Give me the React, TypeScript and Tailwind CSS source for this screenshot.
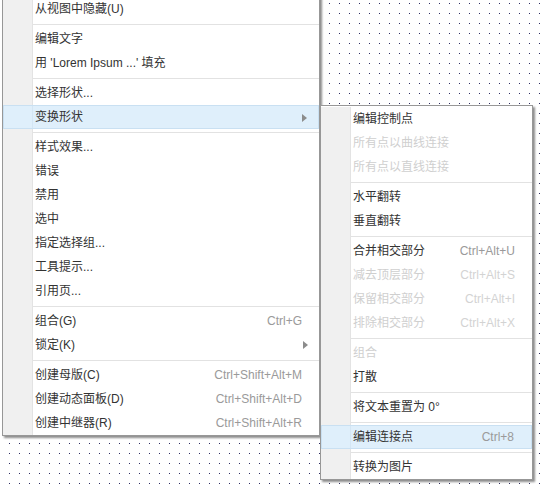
import { ReactNode } from 'react';

type Item =
  | { sep: true }
  | {
      sep?: false;
      label: ReactNode;
      shortcut?: string;
      arrow?: boolean;
      disabled?: boolean;
      active?: boolean;
    };

const mainItems: Item[] = [
  { label: '从视图中隐藏(U)' },
  { sep: true },
  { label: '编辑文字' },
  { label: "用 'Lorem Ipsum ...' 填充" },
  { sep: true },
  { label: '选择形状...' },
  { label: '变换形状', arrow: true, active: true },
  { sep: true },
  { label: '样式效果...' },
  { label: '错误' },
  { label: '禁用' },
  { label: '选中' },
  { label: '指定选择组...' },
  { label: '工具提示...' },
  { label: '引用页...' },
  { sep: true },
  { label: '组合(G)', shortcut: 'Ctrl+G' },
  { label: '锁定(K)', arrow: true },
  { sep: true },
  { label: '创建母版(C)', shortcut: 'Ctrl+Shift+Alt+M' },
  { label: '创建动态面板(D)', shortcut: 'Ctrl+Shift+Alt+D' },
  { label: '创建中继器(R)', shortcut: 'Ctrl+Shift+Alt+R' },
];

const subItems: Item[] = [
  { label: '编辑控制点' },
  { label: '所有点以曲线连接', disabled: true },
  { label: '所有点以直线连接', disabled: true },
  { sep: true },
  { label: '水平翻转' },
  { label: '垂直翻转' },
  { sep: true },
  { label: '合并相交部分', shortcut: 'Ctrl+Alt+U' },
  { label: '减去顶层部分', shortcut: 'Ctrl+Alt+S', disabled: true },
  { label: '保留相交部分', shortcut: 'Ctrl+Alt+I', disabled: true },
  { label: '排除相交部分', shortcut: 'Ctrl+Alt+X', disabled: true },
  { sep: true },
  { label: '组合', disabled: true },
  { label: '打散' },
  { sep: true },
  { label: '将文本重置为 0°' },
  { sep: true },
  { label: '编辑连接点', shortcut: 'Ctrl+8', active: true },
  { sep: true },
  { label: '转换为图片' },
];

function Arrow() {
  return (
    <svg width="5" height="8" viewBox="0 0 5 8" className="absolute right-[11px] top-[8px]">
      <path d="M0 0 L5 4 L0 8 Z" fill="#8c8c8c" />
    </svg>
  );
}

function MenuRow({ item }: { item: Item }) {
  if (item.sep) {
    return (
      <div className="flex h-[6px]">
        <div className="w-[29px] shrink-0 bg-[#f0f0f0]" />
        <div className="w-px shrink-0 bg-[#e3e3e3]" />
        <div className="flex-1 pt-[3px]">
          <div className="h-px bg-[#e2e2e2]" />
        </div>
      </div>
    );
  }

  return (
    <div
      className={
        item.active
          ? 'relative flex h-[24px] border border-[#c9e0f2] bg-[#dfeffb]'
          : 'relative flex h-[24px]'
      }
    >
      <div className={item.active ? 'w-[28px] shrink-0' : 'w-[29px] shrink-0 bg-[#f0f0f0]'} />
      <div className={item.active ? 'w-px shrink-0 bg-[#d4e6f4]' : 'w-px shrink-0 bg-[#e3e3e3]'} />
      <div className="flex flex-1 items-center pl-[2px] pr-[17px]">
        <span className={item.disabled ? 'text-[#cfcfcf]' : 'text-[#333]'}>{item.label}</span>
        {item.shortcut && (
          <span className={item.disabled ? 'ml-auto text-[#d3d3d3]' : 'ml-auto text-[#9a9a9a]'}>
            {item.shortcut}
          </span>
        )}
      </div>
      {item.arrow && <Arrow />}
    </div>
  );
}

function Menu({ items, className }: { items: Item[]; className: string }) {
  return (
    <div
      className={`absolute border border-[#979797] bg-white pt-[1px] shadow-[2px_2px_2px_rgba(0,0,0,0.45)] ${className}`}
    >
      {items.map((item, i) => (
        <MenuRow key={i} item={item} />
      ))}
    </div>
  );
}

export default function App() {
  return (
    <div className="relative h-[488px] w-[540px] overflow-hidden bg-white font-['Liberation_Sans','Noto_Sans_CJK_SC',sans-serif] text-[12px] leading-none">
      <svg className="absolute inset-0" width="540" height="488">
        <defs>
          <pattern id="dots" width="10" height="10" patternUnits="userSpaceOnUse">
            <rect x="9" y="3" width="1" height="1" fill="#2c2c60" />
          </pattern>
        </defs>
        <rect width="540" height="488" fill="url(#dots)" />
      </svg>

      <Menu items={mainItems} className="left-[2px] top-[-5px] w-[318px]" />
      <Menu items={subItems} className="left-[320px] top-[105px] w-[213px]" />
    </div>
  );
}
